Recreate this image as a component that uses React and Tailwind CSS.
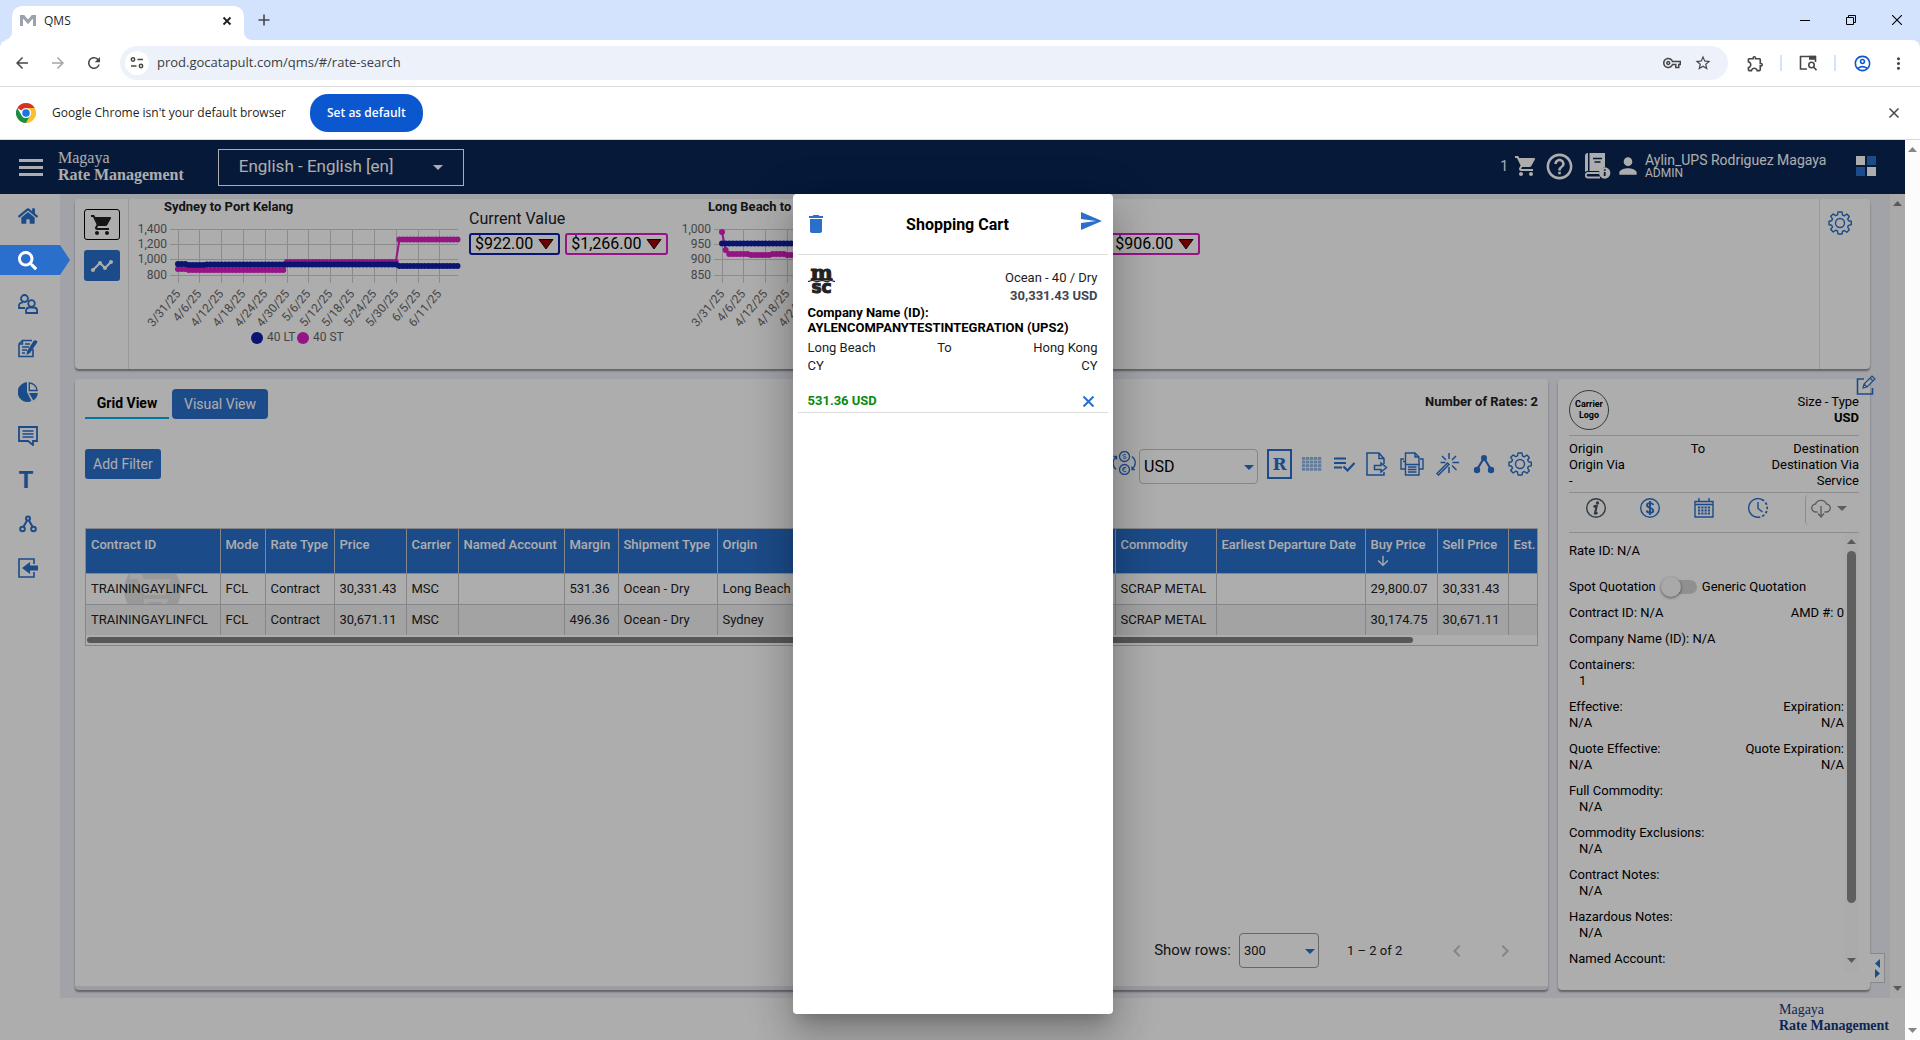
import React from "react";
import {
  MdShoppingCart, MdHelpOutline, MdPerson, MdDelete, MdSend, MdTimeline,
  MdOutlineVpnKey, MdStarBorder, MdMoreVert, MdOutlineExtension, MdOutlineAccountCircle,
  MdArrowBack, MdArrowForward, MdRefresh, MdArrowDownward, MdChevronLeft, MdChevronRight,
} from "react-icons/md";
import { FaHome, FaSearch } from "react-icons/fa";

const NAVY = "#0f1fa8";
const PINK = "#dc1ec6";

/* ---------- icons ---------- */

const Svg = ({ size = 24, vb = 24, children, ...rest }) => (
  <svg width={size} height={size} viewBox={`0 0 ${vb} ${vb}`} fill="none" stroke="currentColor" strokeWidth="1.6" aria-hidden="true" {...rest}>
    {children}
  </svg>
);

const PeopleIcon = () => (
  <Svg size={20} vb={20} strokeWidth="1.8">
    <circle cx="6.5" cy="4.5" r="3.5" />
    <circle cx="13.5" cy="9.5" r="3.3" />
    <path d="M7 14H1v-2.5C1 9.500 2.500 8.600 5 8.400M8.100 19v-2.500c0-2 1.500-3 3.500-3h4c2 0 3.500 1 3.500 3V19z" />
  </Svg>
);

const NoteIcon = () => (
  <Svg size={20} vb={20} strokeWidth="1.6">
    <path d="M14 2.500H4.500L1 6v12.500h14V11" />
    <path d="M4.500 2.500V6H1M7 6h5M4 9h7M4 12h5M4 15h3" strokeWidth="1.400" />
    <path d="M10 13l-.5 2.500 2-1L18 5l-1.800-1.500zM17 2.500l2.200 1.800" fill="currentColor" />
  </Svg>
);

const PieIcon = () => (
  <Svg size={20} vb={20} strokeWidth="1.4">
    <path d="M9 0.300A9.800 9.800 0 1 0 13.500 19L9 10z" fill="currentColor" stroke="none" />
    <path d="M11.300 1v7.500h7.800C18.800 4.500 15.500 1.200 11.300 1z" />
    <path d="M11 11h8.800c-.2 3-1.800 5.800-4.500 7.500z" fill="currentColor" stroke="none" />
  </Svg>
);

const ChatIcon = () => (
  <Svg size={20} vb={20} strokeWidth="1.8">
    <path d="M1 1h18v14h-4v4l-5-4H1z" />
    <path d="M4.500 5h11M4.500 8h11M4.500 11h11" strokeWidth="1.500" />
  </Svg>
);

const BranchIcon = () => (
  <Svg size={20} vb={20} strokeWidth="2">
    <circle cx="10" cy="4.500" r="2" />
    <circle cx="4.500" cy="15" r="2.300" />
    <circle cx="15.500" cy="15" r="2.300" />
    <path d="M9 6.500L5.500 12.800M11 6.500l3.500 6.300" />
  </Svg>
);

const ExitIcon = () => (
  <Svg size={20} vb={20} strokeWidth="1.6">
    <path d="M16 6V1H1v18h15v-5" />
    <path d="M4 10l8-6v3.500h8v5h-8V16z" fill="currentColor" stroke="none" />
  </Svg>
);

const GearIcon = ({ size = 24 }) => (
  <Svg size={size} strokeWidth="1.4" strokeLinejoin="round">
    <path d="M10 1h4l.5 3 1.800.8 2.600-1.800 2.400 2.500-1.600 2.500.8 1.700 2.800.6v3.500l-2.900.6-.8 1.800 1.700 2.500-2.500 2.500-2.400-1.700-1.900.8L14 23h-4l-.5-3-1.800-.8-2.500 1.800-2.500-2.500 1.800-2.500-.8-1.700L1 13.700v-3.500l2.700-.5.8-1.800-1.800-2.600 2.500-2.400 2.500 1.800 1.800-.8z" />
    <circle cx="12" cy="12" r="4.500" />
  </Svg>
);

const CurrencySwapIcon = () => (
  <Svg strokeWidth="1.3">
    <circle cx="12.500" cy="5.500" r="5" />
    <circle cx="12.500" cy="18.500" r="5" />
    <path d="M14 4c-.8-.9-3-.6-3 .5 0 1.300 3 .8 3 2 0 1.200-2.200 1.300-3 .4M14.300 16.800c-1.500-1.300-3.600-.4-3.600 1.700s2.100 3 3.600 1.700M10 18h3" strokeWidth="1" />
    <path d="M4.500 5.500C0 9 0 15 4 18.500M20 5.500c4.300 3.500 4.300 9 0 13M20 15.500v3.200h3M4.500 8.500V5.300h-3" />
  </Svg>
);

const DotGridIcon = () => (
  <Svg fill="currentColor" stroke="none" opacity="0.500">
    {[0, 1, 2, 3, 4].map((c) =>
      [0, 1, 2, 3].map((r) => <rect key={`${c}-${r}`} x={2 + c * 4} y={5 + r * 3.6} width="3.300" height="2.900" />)
    )}
  </Svg>
);

const ListCheckIcon = () => (
  <Svg strokeWidth="2.200">
    <path d="M2 6.500h12M2 11h12M2 15.500h8M11.500 14.500l4 4 7-7.500" />
  </Svg>
);

const ExportIcon = () => (
  <Svg strokeWidth="1.500">
    <path d="M20 12V6.500L15 1H3v22h17v-3M15 1v5.500h5" />
    <path d="M10.500 13.500H17V11l5.500 4.500L17 20v-2.500h-6.500z" />
  </Svg>
);

const PrinterIcon = () => (
  <Svg strokeWidth="1.400">
    <path d="M5.500 13V1H15l4 4v8M15 1v4h4" />
    <path d="M5.500 17H1V7h3M20 7h3v10h-4M5.500 12.500h13.500V23H5.500zM3 9.500h2M8 15h8.500M8 17.500h8.500M8 20h8.500" />
  </Svg>
);

const WandIcon = () => (
  <Svg strokeWidth="1.500">
    <path d="M1 21.500L11.500 11l1.500 1.500L2.500 23zM13 1v6M13 15v6M16.500 10.500H23M4.500 10.500h5M6 4l4 4M20 4l-4 4M16 13.500l4.500 4.500" />
  </Svg>
);

const NodesIcon = () => (
  <Svg fill="currentColor" strokeWidth="2.200">
    <path d="M5 17.500L12 6l7 11.500" fill="none" />
    <g stroke="none">
      <circle cx="12" cy="6" r="3" />
      <circle cx="5" cy="18" r="3.200" />
      <circle cx="19" cy="18" r="3.200" />
    </g>
  </Svg>
);

const Caret = ({ className }) => (
  <svg width="10" height="5" viewBox="0 0 10 5" className={className} aria-hidden="true">
    <path d="M0 0h10L5 5z" fill="currentColor" />
  </svg>
);

const ScrollArrow = ({ up }) => (
  <svg width="9" height="5" viewBox="0 0 9 5" aria-hidden="true">
    <path d={up ? "M0 5h9L4.500 0z" : "M0 0h9L4.500 5z"} fill="#858585" />
  </svg>
);

const ChromeLogo = () => (
  <svg width="20" height="20" viewBox="0 0 48 48" aria-hidden="true">
    <circle cx="24" cy="24" r="24" fill="#fff" />
    <path d="M24 0a24 24 0 0 1 20.800 12H24a12 12 0 0 0-10.400 6L3.200 12A24 24 0 0 1 24 0z" fill="#d93025" />
    <path d="M44.800 12A24 24 0 0 1 24 48l10.400-18A12 12 0 0 0 34.400 18L24 12z" fill="#fbc02d" />
    <path d="M3.200 12A24 24 0 0 0 24 48l10.400-18a12 12 0 0 1-20.800 0z" fill="#1e8e3e" />
    <circle cx="24" cy="24" r="11.500" fill="#fff" />
    <circle cx="24" cy="24" r="9" fill="#1a73e8" />
  </svg>
);

/* ---------- browser frame ---------- */

function BrowserFrame() {
  return (
    <div className="shrink-0 bg-[#d3e3fd] font-['Open_Sans',sans-serif] text-[#1f1f1f]">
      <div className="flex h-10 items-end">
        <div className="relative ml-3 flex h-[34px] w-[232px] items-center rounded-t-[10px] bg-white pb-1 pl-2 pr-3">
          <span className="absolute -left-2 bottom-0 size-2 bg-white"><span className="block size-2 rounded-br-lg bg-[#d3e3fd]" /></span>
          <span className="absolute -right-2 bottom-0 size-2 bg-white"><span className="block size-2 rounded-bl-lg bg-[#d3e3fd]" /></span>
          <svg width="16" height="12" viewBox="0 0 16 12" aria-hidden="true"><path d="M1.500 11V1.500h2L8 7l4.500-5.500h2V11" fill="none" stroke="#9aa3ad" strokeWidth="3" /></svg>
          <span className="ml-2 flex-1 text-xs">QMS</span>
          <button aria-label="Close tab"><Svg size={10} vb={10} strokeWidth="1.800"><path d="M1.500 1.500l7 7M8.500 1.500l-7 7" /></Svg></button>
        </div>
        <button aria-label="New tab" className="mb-3.5 ml-[14px] text-[#474747]"><Svg size={12} vb={12} strokeWidth="1.600"><path d="M6 .5v11M.5 6h11" /></Svg></button>
        <div className="ml-auto flex h-10 text-black">
          <button aria-label="Minimize" className="flex w-[46px] items-center justify-center"><Svg size={10} vb={10} strokeWidth="1"><path d="M0 5.500h10" /></Svg></button>
          <button aria-label="Restore" className="flex w-[46px] items-center justify-center"><Svg size={10} vb={10} strokeWidth="1"><path d="M.5 2.500h7v7h-7zM2.500 2.500v-2h7v7h-2" /></Svg></button>
          <button aria-label="Close window" className="flex w-[46px] items-center justify-center"><Svg size={10} vb={10} strokeWidth="1.100"><path d="M0 0l10 10M10 0L0 10" /></Svg></button>
        </div>
      </div>
      <div className="flex h-[47px] items-center rounded-t-lg border-b border-[#dcdde0] bg-white pl-3 pr-3 text-[#474747]">
        <button aria-label="Back" className="flex w-5 justify-center"><MdArrowBack size={18} /></button>
        <button aria-label="Forward" className="ml-4 flex w-5 justify-center text-[#a5a5a5]"><MdArrowForward size={18} /></button>
        <button aria-label="Reload" className="ml-4 flex w-5 justify-center"><MdRefresh size={18} /></button>
        <div className="ml-4 mr-[9px] flex h-[34px] flex-1 items-center rounded-full bg-[#ecf1fa] pl-[5px] pr-4">
          <span className="flex size-6 items-center justify-center rounded-full bg-white">
            <Svg size={14} vb={14} strokeWidth="1.500"><circle cx="3" cy="3.500" r="1.700" /><path d="M7.500 3.500H13M1 10h5.500" /><circle cx="11" cy="10" r="1.700" /></Svg>
          </span>
          <input aria-label="Address" defaultValue="prod.gocatapult.com/qms/#/rate-search" className="ml-2 flex-1 bg-transparent text-[13px] text-[#3a3d42] outline-none" />
          <MdOutlineVpnKey size={18} className="mr-[13px]" />
          <MdStarBorder size={18} />
        </div>
        <button aria-label="Extensions" className="flex w-9 justify-center"><MdOutlineExtension size={19} /></button>
        <span className="ml-[7px] h-4 w-0.5 bg-[#d3e3fd]" />
        <button aria-label="Search page" className="flex w-[52px] justify-center">
          <Svg size={18} vb={18} strokeWidth="1.600"><path d="M8 15H1.500V2.500h15V8" /><path d="M10 1.800h7v4h-7z" fill="currentColor" stroke="none" /><circle cx="12.500" cy="11" r="2.700" /><path d="M14.500 13l3 3.200" /></Svg>
        </button>
        <span className="h-4 w-0.5 bg-[#d3e3fd]" />
        <button aria-label="Profile" className="flex w-[52px] justify-center text-[#0b57d0]"><MdOutlineAccountCircle size={19} /></button>
        <button aria-label="Menu" className="flex w-5 justify-center"><MdMoreVert size={19} /></button>
      </div>
      <div className="flex h-[53px] items-center border-b border-[#d8d9dc] bg-white pl-4 pr-[19px]">
        <ChromeLogo />
        <span className="ml-4 text-xs">Google Chrome isn't your default browser</span>
        <button className="ml-6 flex h-[38px] items-center rounded-[18px] bg-[#0b57d0] px-[17px] text-xs font-semibold text-white">Set as default</button>
        <button aria-label="Dismiss" className="ml-auto text-[#474747]"><Svg size={14} vb={14} strokeWidth="1.500"><path d="M2.500 2.500l9 9M11.500 2.500l-9 9" /></Svg></button>
      </div>
    </div>
  );
}

/* ---------- application ---------- */

function Header() {
  return (
    <header className="flex h-[54px] shrink-0 items-center bg-[#0a2554] pl-[19px] pr-[29px] text-white">
      <button aria-label="Menu" className="flex w-6 flex-col gap-1">
        <span className="h-[3px] bg-white" /><span className="h-[3px] bg-white" /><span className="h-[3px] bg-white" />
      </button>
      <div className="ml-[15px] pb-0.5 font-['Liberation_Serif',serif] text-base leading-[17px]">
        <div>Magaya</div>
        <div className="font-bold">Rate Management</div>
      </div>
      <div className="relative ml-[34px]">
        <select aria-label="Language" className="h-[37px] w-[246px] appearance-none border border-white bg-transparent pl-5 text-[17px]">
          <option>English - English [en]</option>
        </select>
        <Caret className="pointer-events-none absolute right-[21px] top-4" />
      </div>
      <div className="ml-auto flex items-center pb-0.5">
        <span className="text-sm">1</span>
        <button aria-label="Cart" className="ml-1.5"><MdShoppingCart size={24} /></button>
        <button aria-label="Help" className="ml-1.5"><MdHelpOutline size={31} /></button>
        <button aria-label="Guide" className="ml-2.5">
          <svg width="26" height="26" viewBox="0 0 26 26" aria-hidden="true">
            <path d="M0 3a3 3 0 0 1 3-3v18a4 4 0 0 0-3 1zM4.500 0H20v14a7 7 0 0 0-5 4H4.500z" fill="#fff" />
            <path d="M8 5.500h9M9.500 9h6" stroke="#0a2554" strokeWidth="1.500" />
            <path d="M14 20H3a2 2 0 0 0 0 4.500h12" stroke="#fff" strokeWidth="1.800" fill="none" />
            <circle cx="19.700" cy="20" r="5.700" fill="#fff" />
            <path d="M19.700 19v4M19.700 16.300v1.500" stroke="#0a2554" strokeWidth="1.800" />
          </svg>
        </button>
        <MdPerson size={26} className="ml-1" />
        <div className="ml-1 w-[185px] whitespace-nowrap">
          <div className="text-sm leading-[14px]">Aylin_UPS Rodriguez Magaya</div>
          <div className="text-xs leading-3">ADMIN</div>
        </div>
        <button aria-label="Apps" className="ml-[26px] grid size-5 grid-cols-2 gap-0.5">
          <span className="bg-white" /><span className="bg-[#2a6fcb]" /><span className="bg-[#2a6fcb]" /><span className="bg-white" />
        </button>
      </div>
    </header>
  );
}

const NAV = [
  ["Home", <FaHome size={20} />],
  ["Search", <FaSearch size={19} />],
  ["Customers", <PeopleIcon />],
  ["Quotes", <NoteIcon />],
  ["Reports", <PieIcon />],
  ["Messages", <ChatIcon />],
  ["Tariffs", <span className="-ml-1 text-2xl font-bold leading-5">T</span>],
  ["Routing", <BranchIcon />],
  ["Sign out", <ExitIcon />],
];

function Sidebar() {
  return (
    <nav className="w-[60px] shrink-0 bg-white">
      {NAV.map(([name, icon]) =>
        name === "Search" ? (
          <div key={name} className="flex h-11 items-center">
            <a href="#search" aria-label={name} className="relative z-10 flex h-[30px] w-[60px] items-center bg-[#2a6fcb] pl-[18px] text-white">
              {icon}
              <svg width="10" height="30" className="absolute left-full top-0" aria-hidden="true"><path d="M0 0l10 15L0 30z" fill="#2a6fcb" /></svg>
            </a>
          </div>
        ) : (
          <a key={name} href="#nav" aria-label={name} className="flex h-11 items-center pl-[18px] text-[#2a6fcb]">
            <span className="flex w-5 justify-center">{icon}</span>
          </a>
        )
      )}
    </nav>
  );
}

const DATES = ["3/31/25", "4/6/25", "4/12/25", "4/18/25", "4/24/25", "4/30/25", "5/6/25", "5/12/25", "5/18/25", "5/24/25", "5/30/25", "6/5/25", "6/11/25"];
const TICK_X = [50, 71, 93, 115, 137, 159, 180, 202, 224, 246, 268, 290, 311];
const TICK_Y = [30, 45, 60, 76];
const DAYS = Array.from({ length: 78 }, (_, i) => i);

const sydneyLong = (d) => (d < 3 ? 65 : d < 8 ? 66 : d < 61 ? 65.5 : 67);
const sydneyShort = (d) => (d < 3 ? 70 : d < 30 ? 71 : d < 61 ? 63 : 40.5);
const beachLong = () => 44.5;
const beachShort = (d) => (d === 0 ? 33 : d === 1 ? 51 : d < 8 ? 55 : d < 14 ? 56 : d < 18 ? 55 : 56);

function Series({ value, color }) {
  const pts = DAYS.map((d) => [50 + d * 3.63, value(d)]);
  return (
    <g fill={color}>
      <polyline points={pts.map((p) => p.join(",")).join(" ")} fill="none" stroke={color} strokeWidth="2" />
      {pts.map(([x, y]) => <circle key={x} cx={x} cy={y} r="3" />)}
    </g>
  );
}

function TrendWidget({ title, yLabels, long, short, values }) {
  return (
    <section className="flex w-[544px] shrink-0">
      <div className="w-[341px]">
        <h3 className="h-[15px] pl-9 text-[13px] font-bold leading-[15px]">{title}</h3>
        <svg width="340" height="150" viewBox="0 15 340 150" fontSize="12" fill="#666" role="img" aria-label={title}>
          <g stroke="#cfcfd2" strokeWidth="1">
            {TICK_Y.map((y) => <path key={y} d={`M42 ${y}.5H330`} />)}
            {TICK_X.map((x) => <path key={x} d={`M${x}.5 30V84`} />)}
          </g>
          {yLabels.map((t, i) => <text key={t} x="39" y={TICK_Y[i] + 4} textAnchor="end">{t}</text>)}
          {DATES.map((t, i) => (
            <text key={t} textAnchor="end" transform={`translate(${TICK_X[i] + 3} 95) rotate(-50)`}>{t}</text>
          ))}
          <Series value={short} color={PINK} />
          <Series value={long} color={NAVY} />
          <circle cx="129" cy="139" r="6" fill={NAVY} />
          <text x="139" y="142">40 LT</text>
          <circle cx="175" cy="139" r="6" fill={PINK} />
          <text x="185" y="142">40 ST</text>
        </svg>
      </div>
      <div className="pt-2.5">
        <div className="text-base leading-5">Current Value</div>
        <div className="mt-1 flex gap-[5px]">
          {values.map((v, i) => (
            <div key={i} className={`flex h-[22px] items-center gap-[5px] rounded-[3px] border-2 px-1 text-base leading-[18px] text-black ${i ? "border-[#dc1ec6]" : "border-[#0f1fa8]"}`}>
              {v}
              <svg width="16" height="11" viewBox="0 0 16 11" aria-label="down"><path d="M1 .5h14L8 10z" fill="#9d0000" stroke="#111" /></svg>
            </div>
          ))}
        </div>
      </div>
    </section>
  );
}

function TrendCard() {
  return (
    <div className="flex h-[170px] shrink-0 rounded bg-white shadow-[0_2px_2px_rgba(0,0,0,.4)]">
      <div className="flex w-[54px] flex-col items-center gap-2.5 border-r border-[#e2e2e6] pt-2.5">
        <button aria-label="Cart" className="flex h-[31px] w-9 items-center justify-center rounded-[3px] border border-black"><MdShoppingCart size={24} /></button>
        <button aria-label="Trends" className="flex h-[31px] w-9 items-center justify-center rounded-[3px] bg-[#2a6fcb] text-white"><MdTimeline size={24} /></button>
      </div>
      <div className="-ml-px flex min-w-0 flex-1 overflow-hidden">
        <TrendWidget title="Sydney to Port Kelang" yLabels={["1,400", "1,200", "1,000", "800"]} long={sydneyLong} short={sydneyShort} values={["$922.00", "$1,266.00"]} />
        <TrendWidget title="Long Beach to Sydney" yLabels={["1,000", "950", "900", "850"]} long={beachLong} short={beachShort} values={["$953.00", "$906.00"]} />
      </div>
      <div className="w-[51px] border-l border-[#e2e2e6] pl-2 pt-3 text-[#2a6fcb]">
        <button aria-label="Trend settings"><GearIcon size={24} /></button>
      </div>
    </div>
  );
}

const COLUMNS = [
  ["Contract ID", "w-[134px]"], ["Mode", "w-[45px]"], ["Rate Type", "w-[69px]"], ["Price", "w-[72px]"],
  ["Carrier", "w-[52px]"], ["Named Account", "w-[106px]"], ["Margin", "w-[54px]"], ["Shipment Type", "w-[99px]"],
  ["Origin", "w-[199px]"], ["Destination", ""], ["Commodity", "w-[101px]"], ["Earliest Departure Date", "w-[149px]"],
  ["Buy Price", "w-[72px]"], ["Sell Price", "w-[71px]"], ["Est.", "w-[29px]"],
];
const ROWS = [
  ["TRAININGAYLINFCL", "FCL", "Contract", "30,331.43", "MSC", "", "531.36", "Ocean - Dry", "Long Beach", "Hong Kong", "SCRAP METAL", "", "29,800.07", "30,331.43", ""],
  ["TRAININGAYLINFCL", "FCL", "Contract", "30,671.11", "MSC", "", "496.36", "Ocean - Dry", "Sydney", "Hong Kong", "SCRAP METAL", "", "30,174.75", "30,671.11", ""],
];

function RatesTable() {
  return (
    <div className="mt-11 overflow-hidden border border-[#c4c6cc]">
      <table className="w-full table-fixed border-collapse text-left text-[13px]">
        <thead className="bg-[#2a6fcb] text-white">
          <tr>
            {COLUMNS.map(([name, width]) => (
              <th key={name} className={`h-11 whitespace-nowrap border-r border-[#c4c6cc] p-0 pl-[5px] pt-2 align-top font-medium leading-4 last:border-r-0 ${width}`}>
                {name}
                {name === "Buy Price" && <MdArrowDownward size={16} className="ml-1" />}
              </th>
            ))}
          </tr>
        </thead>
        <tbody>
          {ROWS.map((row, r) => (
            <tr key={r} className={r ? "bg-[#f0f0f0]" : "bg-white"}>
              {row.map((cell, c) => (
                <td key={c} className="relative h-[31px] overflow-hidden whitespace-nowrap border-r border-t border-[#c4c6cc] p-0 pl-[5px] leading-4 last:border-r-0">
                  {r === 0 && c === 0 && (
                    <svg width="57" height="30" viewBox="0 0 57 30" className="absolute left-[38px] top-0" aria-hidden="true">
                      <circle cx="28.500" cy="16" r="28.500" fill="#e2e2e2" />
                      <path d="M6 0h11l3 5h27l-6 16H20L14 5H6zM20 25h24v3H20z" fill="#f3f3f3" />
                      <circle cx="22" cy="31" r="3" fill="#f3f3f3" /><circle cx="40" cy="31" r="3" fill="#f3f3f3" />
                    </svg>
                  )}
                  <span className="relative">{cell}</span>
                </td>
              ))}
            </tr>
          ))}
        </tbody>
      </table>
      <div className="flex h-2.5 items-center px-px"><span className="h-1.5 w-[91.5%] rounded-full bg-[#808080]" /></div>
    </div>
  );
}

function RatesCard() {
  return (
    <section className="flex min-w-0 flex-1 flex-col rounded border-b-4 border-[#e6e8f0] bg-white px-2.5 pt-2.5 shadow-[0_2px_2px_rgba(0,0,0,.4)]">
      <div className="flex gap-[3px]">
        <button className="h-[30px] w-[84px] border-b-2 border-[#00aeef] text-sm font-bold text-black">Grid View</button>
        <button className="h-[30px] w-24 rounded-sm bg-[#2a6fcb] text-sm text-white">Visual View</button>
        <span className="ml-auto pt-[3px] text-[13px] font-bold">Number of Rates: 2</span>
      </div>
      <div className="mt-[30px] flex items-start text-[#2a6fcb]">
        <button className="h-[30px] rounded-[3px] bg-[#2a6fcb] px-2 text-sm text-white">Add Filter</button>
        <div className="ml-auto flex items-start pr-1.5">
          <span className="mr-[3px] flex h-7 items-center"><CurrencySwapIcon /></span>
          <div className="relative mr-[9px]">
            <select aria-label="Currency" className="h-[35px] w-[119px] appearance-none rounded border border-[#c4c4c4] bg-transparent pl-1 text-base text-black"><option>USD</option></select>
            <Caret className="pointer-events-none absolute right-1 top-4" />
          </div>
          <button className="mr-2 flex h-[30px] w-[25px] items-center justify-center border-2 border-current font-['DejaVu_Serif',serif] text-[17px] font-bold leading-none">R</button>
          <div className="mr-3 flex gap-2">
            <button aria-label="Grid" className="flex h-[30px] items-center"><DotGridIcon /></button>
            <button aria-label="Select list" className="flex h-[30px] items-center"><ListCheckIcon /></button>
            <button aria-label="Export" className="flex h-[30px] items-center"><ExportIcon /></button>
          </div>
          <div className="flex gap-3">
            <button aria-label="Print" className="flex h-[30px] items-center"><PrinterIcon /></button>
            <button aria-label="Wizard" className="flex h-[30px] items-center"><WandIcon /></button>
            <button aria-label="Share" className="flex h-[30px] items-center"><NodesIcon /></button>
            <button aria-label="Settings" className="flex h-[30px] items-center"><GearIcon /></button>
          </div>
        </div>
      </div>
      <RatesTable />
      <div className="mb-[18px] mt-auto flex items-center justify-end pr-5">
        <label htmlFor="rows" className="text-[15px]">Show rows:</label>
        <div className="relative ml-2">
          <select id="rows" className="h-[35px] w-20 appearance-none rounded border border-[#9a9a9a] bg-transparent pl-1 text-[13px]"><option>300</option></select>
          <Caret className="pointer-events-none absolute right-1 top-4 text-[#2a6fcb]" />
        </div>
        <span className="ml-7 w-[85px] text-[13px]">1 – 2 of 2</span>
        <button aria-label="Previous page" className="ml-3 flex w-[26px] justify-center text-[#c6c6c6]"><MdChevronLeft size={24} /></button>
        <button aria-label="Next page" className="ml-[22px] flex w-[26px] justify-center text-[#c6c6c6]"><MdChevronRight size={24} /></button>
      </div>
    </section>
  );
}

const Pair = ({ left, right }) => (
  <div className="flex justify-between">
    <div>{left}<br />N/A</div>
    <div className="text-right">{right}<br />N/A</div>
  </div>
);
const Field = ({ label, value }) => (
  <div>
    {label}
    {value && <div className="pl-2.5">{value}</div>}
  </div>
);

function DetailCard() {
  return (
    <aside className="relative flex w-[312px] shrink-0 flex-col rounded bg-white px-[11px] pb-[18px] pt-[11px] text-[13px] leading-4 text-black shadow-[0_2px_2px_rgba(0,0,0,.4)]">
      <button aria-label="Edit" className="absolute -right-1.5 -top-1 text-[#2a6fcb]">
        <Svg size={20} vb={20} strokeWidth="1.600"><path d="M8 4H1.500v15h15v-6" /><path d="M7 13l1-4 8-8 3 3-8 8zM14 3l3 3M8 9l3 3" strokeWidth="1.200" /></Svg>
      </button>
      <button aria-label="Resize panel" className="absolute -right-[15px] bottom-[7px] flex h-[30px] w-[15px] flex-col items-center justify-center gap-px border border-l-0 border-[#c9c9c9] bg-white text-[#2a6fcb]">
        <svg width="5" height="9" aria-hidden="true"><path d="M5 0v9L0 4.500z" fill="currentColor" /></svg>
        <svg width="5" height="9" aria-hidden="true"><path d="M0 0v9l5-4.500z" fill="currentColor" /></svg>
      </button>
      <div className="flex h-[46px] justify-between border-b border-[#cfcfcf]">
        <div className="flex size-10 flex-col items-center justify-center rounded-full border border-[#555] text-[9px] font-bold leading-[11px]">
          <span>Carrier</span><span>Logo</span>
        </div>
        <div className="pt-1 text-right">Size - Type<br /><b>USD</b></div>
      </div>
      <div className="flex h-[57px] justify-between border-b border-[#cfcfcf] pt-[5px]">
        <div className="flex-1">Origin<br />Origin Via<br />-</div>
        <div className="pr-8">To</div>
        <div className="flex-1 text-right">Destination<br />Destination Via<br />Service</div>
      </div>
      <div className="flex h-10 items-start gap-[34px] border-b border-[#cfcfcf] pl-[17px] pt-[5px] text-[#2a6fcb]">
        <button aria-label="Information" className="text-[#4a5560]">
          <Svg size={20} vb={20} strokeWidth="1.400"><circle cx="10" cy="10" r="9.300" /><circle cx="11.500" cy="5" r="1.700" fill="currentColor" stroke="none" /><path d="M7.500 9c1.500-1 2.700-1.200 3.200-1L9 15.500c.7.200 1.800-.3 2.500-1" strokeWidth="2.200" /></Svg>
        </button>
        <button aria-label="Charges">
          <Svg size={20} vb={20} strokeWidth="1.400"><circle cx="10" cy="10" r="9.300" /><path d="M13.200 7C12.500 4.500 7 4.500 7 7.300c0 3.200 6.200 1.800 6.200 5.200 0 3-6 3-6.500 0M10 3v14" strokeWidth="1.900" /></Svg>
        </button>
        <button aria-label="Schedule">
          <Svg size={20} vb={20} strokeWidth="1.400"><path d="M1 3.500h18V19H1zM1 6.500h18M5 0v4M15 0v4" /><path d="M4 9.500h12M4 12.500h12M4 15.500h12" strokeWidth="2" strokeDasharray="2.200 1.070" /></Svg>
        </button>
        <button aria-label="History">
          <Svg size={20} vb={20} strokeWidth="1.400"><path d="M10 19.300A9.300 9.300 0 1 1 14 1.600" /><path d="M14 1.600A9.300 9.300 0 0 1 10 19.300" strokeDasharray="2.500 2" strokeWidth="1.800" /><path d="M10 4v6.500l4.500 3.500" /></Svg>
        </button>
        <button aria-label="Download" className="-mt-[3px] ml-[3px] flex h-[30px] items-center gap-1.5 rounded-l border-l border-[#cfcfcf] pb-1 pl-[5px] text-[#8b8b8b]">
          <Svg size={20} vb={20} strokeWidth="1.400"><path d="M6.500 14H5A4 4 0 0 1 4.500 6 6 6 0 0 1 15.500 6a4 4 0 0 1-.500 8h-1.500M10 8v11M7 15.500l3 3.500 3-3.500" /></Svg>
          <Caret />
        </button>
      </div>
      <div className="flex min-h-0 flex-1">
        <div className="flex flex-1 flex-col gap-2.5 overflow-hidden pt-2.5">
          <div className="pb-2.5">Rate ID: N/A</div>
          <label className="flex items-center">
            Spot Quotation
            <input type="checkbox" role="switch" className="sr-only" />
            <span className="relative ml-3 mr-[5px] block h-3.5 w-[29px] rounded-full bg-[#d4d4d4]">
              <span className="absolute -left-[7px] -top-[3px] size-5 rounded-full bg-[#fafafa] shadow-[0_1px_3px_rgba(0,0,0,.5)]" />
            </span>
            Generic Quotation
          </label>
          <div className="flex justify-between"><span>Contract ID: N/A</span><span>AMD #: 0</span></div>
          <div>Company Name (ID): N/A</div>
          <Field label="Containers:" value="1" />
          <Pair left="Effective:" right="Expiration:" />
          <Pair left="Quote Effective:" right="Quote Expiration:" />
          <Field label="Full Commodity:" value="N/A" />
          <Field label="Commodity Exclusions:" value="N/A" />
          <Field label="Contract Notes:" value="N/A" />
          <Field label="Hazardous Notes:" value="N/A" />
          <Field label="Named Account:" />
        </div>
        <div className="flex w-[15px] flex-col items-center justify-between bg-[#fcfcfc] pb-[9px] pt-1.5">
          <ScrollArrow up />
          <span className="mb-auto mt-[7px] h-[83%] w-[9px] rounded-full bg-[#8c8c8c]" />
          <ScrollArrow />
        </div>
      </div>
    </aside>
  );
}

const MscLogo = () => (
  <svg width="27" height="27" viewBox="0 0 27 27" role="img" aria-label="MSC" fill="#222" stroke="#222" className="overflow-visible">
    <text x="13.500" y="13" textAnchor="middle" fontFamily="DejaVu Serif, serif" fontWeight="700" fontSize="21" strokeWidth="1">m</text>
    <path d="M0 14.500c2 0 2-1 4-1s3 1 5.500 1 2.500-1 4.500-1 2.500 1 5 1 2-1 4-1 2 1 4 1" fill="none" strokeWidth="1.200" />
    <text x="13.500" y="25.500" textAnchor="middle" fontFamily="DejaVu Sans, sans-serif" fontWeight="700" fontSize="17" strokeWidth="1">sc</text>
  </svg>
);

function CartDialog() {
  return (
    <div className="absolute inset-0 flex justify-center bg-black/[.32] pb-[26px] pt-[54px]">
      <div role="dialog" aria-label="Shopping Cart" className="w-80 rounded bg-white px-[5px] text-[13px] leading-[18px] text-[#1c1c1c] shadow-[0_11px_15px_-7px_rgba(0,0,0,.2),0_24px_38px_3px_rgba(0,0,0,.14),0_9px_46px_8px_rgba(0,0,0,.12)]">
        <div className="flex h-[61px] items-center justify-between border-b border-[#dcdcdc] pl-1.5 pr-1 text-[#2a6fcb]">
          <button aria-label="Empty cart"><MdDelete size={24} /></button>
          <h2 className="pl-2 pt-0.5 text-base font-bold text-black">Shopping Cart</h2>
          <button aria-label="Send" className="pb-1.5"><MdSend size={24} /></button>
        </div>
        <div className="border-b border-[#dcdcdc] px-2.5 pb-0.5 pt-3">
          <div className="flex h-[38px] justify-between">
            <MscLogo />
            <div className="pt-0.5 text-right">Ocean - 40 / Dry<br /><b className="text-[#42454f]">30,331.43 USD</b></div>
          </div>
          <div className="font-bold leading-[15px] text-black">Company Name (ID):<br />AYLENCOMPANYTESTINTEGRATION (UPS2)</div>
          <div className="mt-1 flex justify-between">
            <div className="flex-1">Long Beach<br />CY</div>
            <div className="pr-4">To</div>
            <div className="flex-1 text-right">Hong Kong<br />CY</div>
          </div>
          <div className="mt-4 flex h-[19px] items-center justify-between">
            <b className="text-[#0b8a0b]">531.36 USD</b>
            <button aria-label="Remove" className="pr-1 pt-0.5 text-[#2a6fcb]"><Svg size={11} vb={11} strokeWidth="2"><path d="M.5.5l10 10M10.500.5l-10 10" /></Svg></button>
          </div>
        </div>
      </div>
    </div>
  );
}

export default function App() {
  return (
    <div className="flex h-screen flex-col overflow-hidden font-[Roboto,sans-serif] text-[#212121]">
      <BrowserFrame />
      <div className="flex min-h-0 flex-1">
        <div className="relative flex min-w-0 flex-1 flex-col">
          <Header />
          <div className="flex min-h-0 flex-1">
            <Sidebar />
            <main className="flex min-w-0 flex-1 flex-col gap-2.5 bg-[#edf0f8] pb-2 pl-[15px] pr-5 pt-[5px]">
              <TrendCard />
              <div className="flex min-h-0 flex-1 gap-2.5">
                <RatesCard />
                <DetailCard />
              </div>
            </main>
            <div className="flex w-[15px] flex-col items-center justify-between bg-[#f9f9f9] py-[7px]"><ScrollArrow up /><ScrollArrow /></div>
          </div>
          <footer className="flex h-[42px] shrink-0 justify-end bg-white pr-4 pt-1 font-['Liberation_Serif',serif] text-sm leading-4 text-[#14397d]">
            <div>Magaya<br /><b>Rate Management</b></div>
          </footer>
          <CartDialog />
        </div>
        <div className="flex w-[15px] flex-col items-center justify-between bg-[#fcfcfc] py-[7px]"><ScrollArrow up /><ScrollArrow /></div>
      </div>
    </div>
  );
}
